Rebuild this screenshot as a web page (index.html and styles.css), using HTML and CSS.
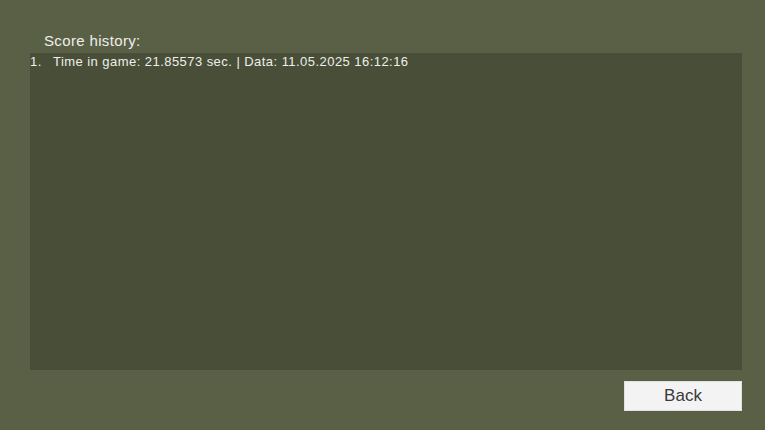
FILE: index.html
```html
<!DOCTYPE html>
<html lang="en">
<head>
    <meta charset="UTF-8">
    <title>Score history</title>
    <link rel="stylesheet" href="styles.css">
</head>
<body>
    <div class="screen">
        <div class="title">Score history:</div>
        <div class="panel">
            <ol class="history">
                <li>Time in game: 21.85573 sec. | Data: 11.05.2025 16:12:16</li>
            </ol>
        </div>
        <div class="footer">
            <button class="button">Back</button>
        </div>
    </div>
</body>
</html>
```

FILE: styles.css
```css
body {
    margin: 0;
    padding: 0;
    background-color: #5a6046;
    font-family: "Liberation Sans", Arial, sans-serif;
}
.screen {
    width: 765px;
    height: 430px;
    box-sizing: border-box;
    padding: 32px 23px 0 30px;
    display: flex;
    flex-direction: column;
}
.title {
    color: #eeeeea;
    font-size: 15px;
    letter-spacing: 0.35px;
    line-height: 18px;
    padding-left: 14px;
    height: 21px;
}
.panel {
    height: 317px;
    background-color: #494e38;
}
.history {
    margin: 0;
    padding: 1px 0 0 0;
    list-style: none;
    color: #eeeeea;
    font-size: 13px;
    letter-spacing: 0.45px;
    line-height: 15px;
}
.history li {
    padding-left: 23px;
    position: relative;
}
.history li::before {
    content: "1.";
    position: absolute;
    left: 0;
}
.footer {
    display: flex;
    justify-content: flex-end;
    margin-top: 11px;
}
.button {
    width: 118px;
    height: 30px;
    background-color: #f3f3f3;
    border: 1px solid #e2e2e2;
    color: #3a3a3a;
    font-family: "Liberation Sans", Arial, sans-serif;
    font-size: 17px;
    padding: 0;
}
```
